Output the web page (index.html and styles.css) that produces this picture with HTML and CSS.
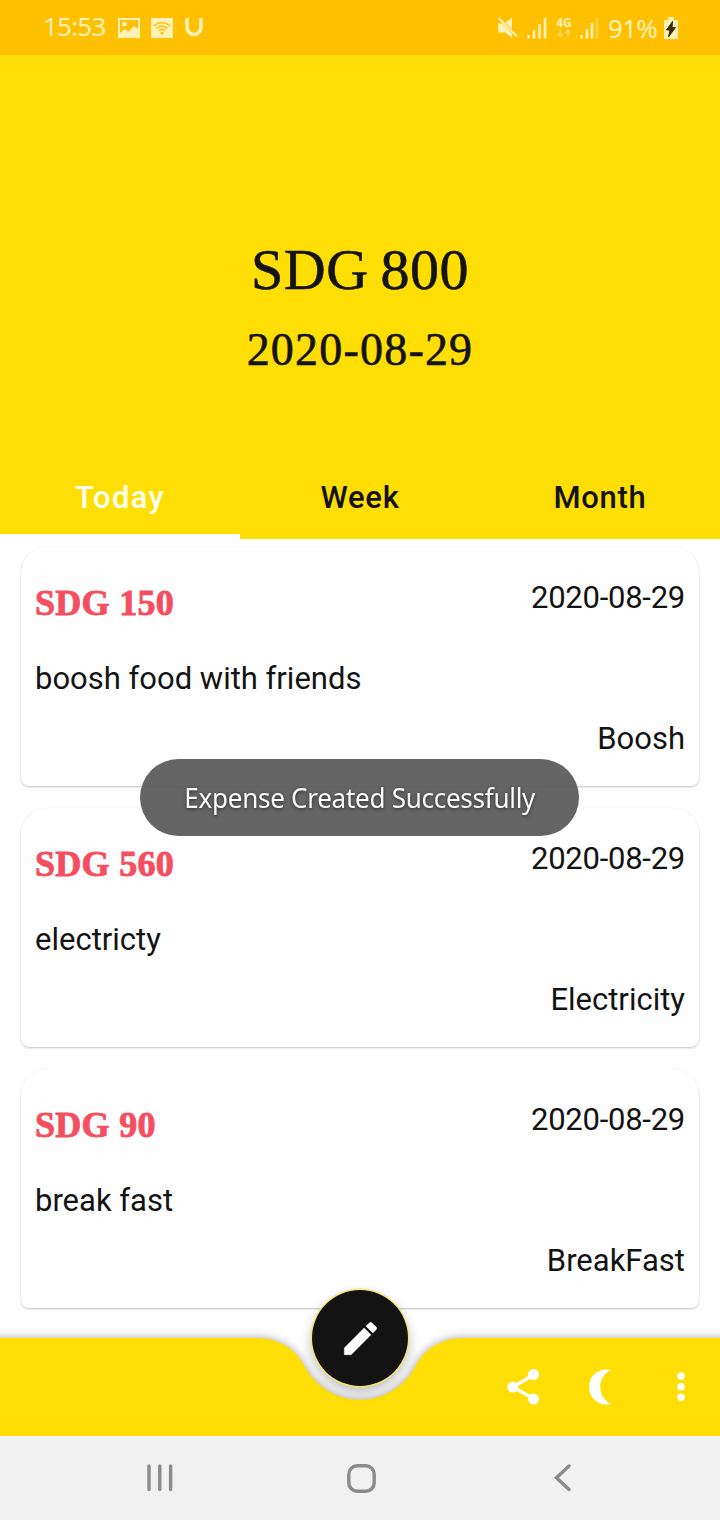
FILE: index.html
```html
<!DOCTYPE html>
<html lang="en">
<head>
<meta charset="utf-8">
<title>Expenses</title>
<link rel="stylesheet" href="styles.css">
</head>
<body>
<div class="app">
  <header class="status">
    <div class="status-left">
      <span class="clock">15:53</span>
      <svg class="ico-picture" width="22" height="20" viewBox="0 0 22 20"><path fill="currentColor" fill-rule="evenodd" d="M0 0H22V20H0ZM2 2V15L7 11L10.500 13.500L16 8L20 11V2ZM4 6a2.500 2.500 0 1 0 5 0a2.500 2.500 0 1 0-5 0Z"/></svg>
      <svg class="ico-wifi" width="22" height="20" viewBox="0 0 22 20"><rect width="22" height="20" fill="currentColor"/><g fill="none" stroke="#ffc002" stroke-width="1.500"><path d="M3 8Q11 1 19 8"/><path d="M5.500 10.500Q11 5.500 16.500 10.500"/><path d="M8 12.800Q11 10 14 12.800"/></g><circle cx="11" cy="15" r="1.500" fill="#ffc002"/></svg>
      <svg class="ico-u" width="18" height="19" viewBox="0 0 18 19"><path d="M2 0V9A7 7.500 0 0 0 16 9V0" fill="none" stroke="currentColor" stroke-width="3.600"/></svg>
    </div>
    <div class="status-right">
      <svg class="ico-mute" width="22" height="22" viewBox="0 0 22 22"><path fill="currentColor" d="M1 6.500H5L15 16.500V21L8 15.500H1ZM15 0.500V12L8.500 5.500Z"/><path d="M1.500 1L20 19.500" stroke="currentColor" stroke-width="2.200"/></svg>
      <svg class="ico-signal" width="20" height="22" viewBox="0 0 20 22"><path d="M1.500 18V21.500M7 13V21.500M12.500 7V21.500M18 1V21.500" stroke="currentColor" stroke-width="2.600"/></svg>
      <span class="network"><b>4G</b><svg width="14" height="9" viewBox="0 0 14 9" fill="none" stroke="currentColor" stroke-width="1.500"><path d="M3 0V7M0.500 4.500L3 7.500L5.500 4.500M11 8.500V1M8.500 4L11 1L13.500 4"/></svg></span>
      <svg class="ico-signal2" width="19" height="22" viewBox="0 0 19 22" stroke="currentColor" stroke-width="2.600"><path d="M1.500 18V21.500M7 12V21.500M12 6V21.500"/><path d="M17 1V21.500" opacity=".35"/></svg>
      <span class="percent">91%</span>
      <svg class="ico-battery" width="14" height="22" viewBox="0 0 14 22"><path fill="currentColor" d="M0 3H4V0H10V3H14V22H0Z"/><path fill="#3a2c08" stroke="#3a2c08" d="M8.500 4.500L2.500 13H6L4.500 20L11.500 10.500H8Z"/></svg>
    </div>
  </header>

  <section class="summary">
    <div class="total">SDG 800</div>
    <div class="total-date">2020-08-29</div>
    <nav class="tabs">
      <div class="tab tab-active">Today</div>
      <div class="tab">Week</div>
      <div class="tab">Month</div>
    </nav>
  </section>

  <main class="list">
    <article class="card">
      <div class="row"><b class="amount">SDG 150</b><span class="date">2020-08-29</span></div>
      <div class="note">boosh food with friends</div>
      <div class="category">Boosh</div>
    </article>
    <article class="card">
      <div class="row"><b class="amount">SDG 560</b><span class="date">2020-08-29</span></div>
      <div class="note">electricty</div>
      <div class="category">Electricity</div>
    </article>
    <article class="card">
      <div class="row"><b class="amount">SDG 90</b><span class="date">2020-08-29</span></div>
      <div class="note">break fast</div>
      <div class="category">BreakFast</div>
    </article>
  </main>

  <div class="bottombar">
    <svg class="bar-shape" width="720" height="98" viewBox="0 0 720 98"><path fill="#ffde05" d="M-10 0H256C281 0 297 13 305 29A62.500 62.500 0 0 0 415 29C423 13 439 0 464 0H730V98H-10Z"/></svg>
    <div class="actions">
      <svg class="share" width="33" height="36" viewBox="0 0 33 36"><path d="M27 5.500L6 18L27 30" fill="none" stroke="#fff" stroke-width="3.400"/><g fill="#fff"><circle cx="26.500" cy="5.500" r="5.500"/><circle cx="5.700" cy="18" r="5.500"/><circle cx="26.500" cy="30" r="5.500"/></g></svg>
      <svg class="moon" width="23" height="36" viewBox="0 0 23 36"><path fill="#fff" d="M22.500 1C9.500-2 0 7 0 18S9.500 38 22.500 35C7.500 29 7.500 7 22.500 1Z"/></svg>
      <svg class="more" width="8" height="30" viewBox="0 0 8 30" fill="#fff"><circle cx="4" cy="4" r="3.800"/><circle cx="4" cy="14.700" r="3.800"/><circle cx="4" cy="25.300" r="3.800"/></svg>
    </div>
    <div class="fab"><svg width="43" height="43" viewBox="0 0 24 24"><path fill="#fff" stroke="#fff" stroke-width=".3" d="M3 17.250V21h3.750L17.810 9.940l-3.750-3.750L3 17.250zM20.710 7.040c.39-.39.39-1.020 0-1.410l-2.340-2.340c-.39-.39-1.020-.39-1.410 0l-1.830 1.830 3.750 3.750 1.830-1.830z"/></svg></div>
  </div>

  <footer class="sysnav">
    <svg class="recents" width="26" height="28" viewBox="0 0 26 28"><path d="M2 2V25.500M12.800 2V25.500M23.600 2V25.500"/></svg>
    <svg class="home" width="29" height="29" viewBox="0 0 29 29"><rect x="1.800" y="1.800" width="25.400" height="25.400" rx="8.500"/></svg>
    <svg class="back" width="17" height="28" viewBox="0 0 17 28"><path d="M15 2L2.500 13.800L15 25.500"/></svg>
  </footer>

  <div class="toast"><span>Expense Created Successfully</span></div>
</div>
</body>
</html>
```
FILE: styles.css
```css
body { margin: 0; background: #fefefe; }
.app { position: relative; width: 720px; height: 1520px; overflow: hidden; display: flex; flex-direction: column; font-family: Roboto, sans-serif; color: #131313; }
svg { display: block; flex: none; }

.status { height: 55px; flex: none; box-sizing: border-box; background: #ffc002; color: #fff0b4; display: flex; justify-content: space-between; padding: 0 42px 0 43px; font-family: "Noto Sans", sans-serif; }
.status-left, .status-right { display: flex; align-items: center; height: 55px; }
.clock { width: 62px; font-size: 26px; letter-spacing: -.8px; line-height: 53px; height: 55px; }
.ico-picture { margin-left: 13px; }
.ico-wifi { margin-left: 11px; }
.ico-u { margin-left: 12px; }
.ico-signal { margin-left: 8px; }
.network { width: 16px; margin-left: 9px; display: flex; flex-direction: column; align-items: center; font-size: 12px; line-height: 12px; }
.network svg { opacity: .55; }
.ico-signal2 { margin-left: 8px; }
.percent { width: 51px; margin-left: 9px; font-size: 26px; letter-spacing: -.7px; }
.ico-battery { margin-left: 5px; }

.summary { height: 484px; flex: none; background: #ffde05; display: flex; flex-direction: column; align-items: center; font-family: "Liberation Serif", serif; }
.total { margin-top: 180px; line-height: 70px; font-size: 58px; letter-spacing: .5px; word-spacing: -3px; -webkit-text-stroke: .6px; }
.total-date { margin-top: 18px; line-height: 54px; font-size: 46px; letter-spacing: 1.2px; -webkit-text-stroke: .6px; }
.tabs { width: 100%; height: 82px; margin-top: auto; display: flex; font: 500 31px/82px Roboto, sans-serif; letter-spacing: .7px; }
.tab { width: 240px; box-sizing: border-box; text-align: center; }
.tab-active { color: #fffff0; letter-spacing: 1.3px; border-bottom: 5px solid #fefefe; }

.list { flex: 1; min-height: 0; padding: 8px 21px 0; display: flex; flex-direction: column; gap: 22px; }
.card { height: 239px; flex: none; box-sizing: border-box; padding: 27px 14px 0; background: #fefefe; border-radius: 26px 26px 8px 8px; box-shadow: 0 1px 2px rgba(0,0,0,.24); font-size: 31px; }
.row { display: flex; justify-content: space-between; height: 72px; }
.amount { font: bold 36px/58px "Liberation Serif", serif; letter-spacing: .3px; color: #f44e60; -webkit-text-stroke: .9px; }
.date { line-height: 48px; letter-spacing: -.25px; }
.note { line-height: 66px; }
.category { line-height: 54px; text-align: right; }

.bottombar { position: relative; height: 98px; flex: none; }
.bar-shape { overflow: visible; filter: drop-shadow(0 0 5px rgba(0,0,0,.36)); }
.actions { position: absolute; top: 0; right: 35px; height: 98px; display: flex; align-items: center; }
.moon { margin-left: 49px; }
.more { margin-left: 65px; }
.fab { position: absolute; left: 312px; top: -48px; width: 96px; height: 96px; border-radius: 50%; background: #131313; box-shadow: 0 0 0 1.5px #f5e678, 0 5px 12px rgba(0,0,0,.3); display: flex; align-items: center; justify-content: center; box-sizing: border-box; }

.sysnav { position: relative; z-index: 1; height: 84px; flex: none; box-sizing: border-box; padding: 0 147px; background: #f1f1f1; display: flex; align-items: center; fill: none; stroke: #8b8b8b; stroke-width: 3.4; stroke-linecap: round; }
.home { margin-left: 174px; }
.back { margin-left: 178px; }

.toast { position: absolute; left: 140px; top: 759px; width: 439px; height: 77px; border-radius: 39px; background: rgba(88,88,88,.92); color: #fafafa; text-align: center; font: 27px/77px "Noto Sans", sans-serif; letter-spacing: -.3px; text-shadow: 0 1px 4px rgba(0,0,0,.6); white-space: nowrap; }
.toast span { display: inline-block; transform: scaleX(.965); }
```
